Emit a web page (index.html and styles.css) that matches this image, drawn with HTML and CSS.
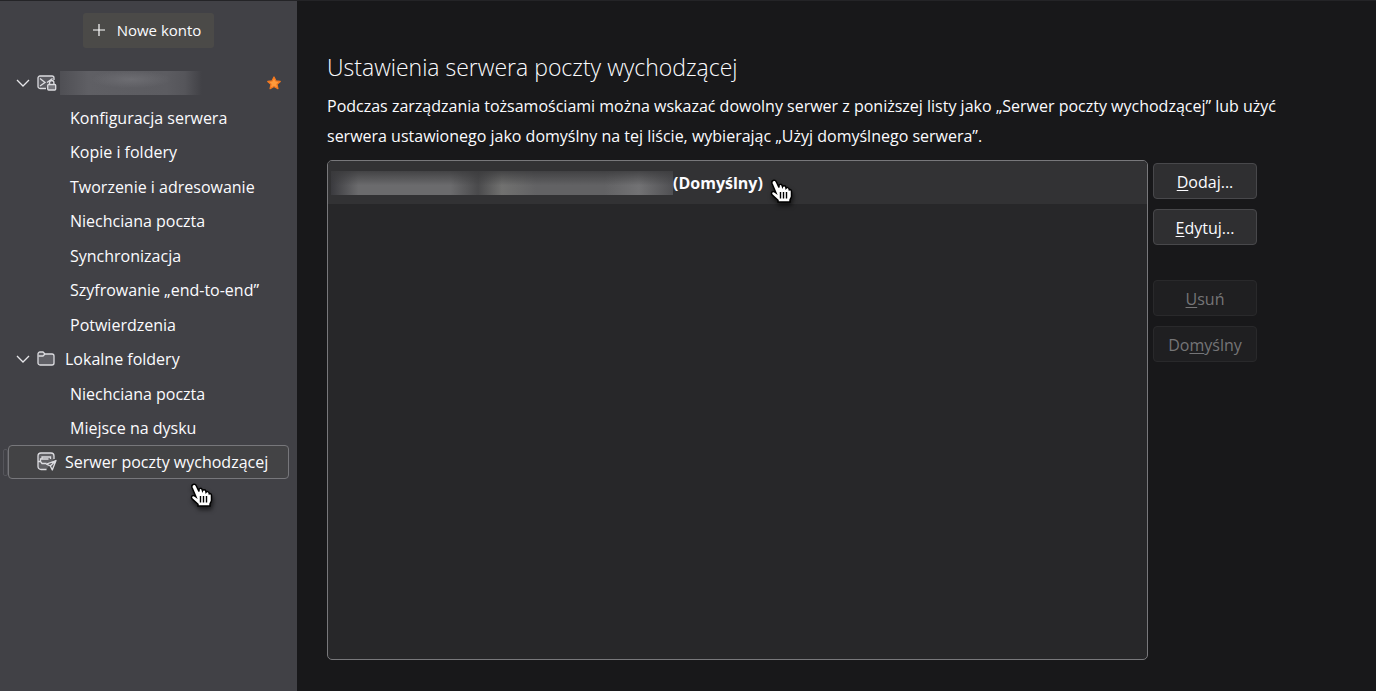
FILE: index.html
```html
<!DOCTYPE html>
<html lang="pl">
<head>
    <meta charset="UTF-8"/>
    <meta name="viewport" content="width=device-width, initial-scale=1.0"/>
    <title>Ustawienia kont</title>
    <link rel="stylesheet" href="styles.css">
</head>

<body>
<div class="container">
    <nav class="sidebar">
        <button class="new-account" type="button">
            <svg width="12" height="12" viewBox="0 0 12 12"><path d="M6 0v12M0 6h12" fill="none" stroke="#fff" stroke-width="1.2"/></svg>
            Nowe konto
        </button>
        <ul class="tree">
            <li class="row account">
                <svg class="twisty" width="14" height="8" viewBox="0 0 14 8"><path d="M1 1l6 6 6-6"/></svg>
                <svg class="icon" width="20" height="18" viewBox="0 0 20 18">
                    <path d="M9 14.500H3A2 2 0 0 1 1 12.500V4a2 2 0 0 1 2-2h12a2 2 0 0 1 2 2v2" fill="#5b5b61"/>
                    <path d="M3 4.500L8 8.500L3 12M15.500 4.500L10 8.500"/>
                    <rect x="10.700" y="10.500" width="8" height="5.500" rx="1" fill="#77777d"/>
                    <path d="M12.500 10V8.700a2.200 2.200 0 0 1 4.400 0V10"/>
                </svg>
                <span class="hidden-name"></span>
                <svg class="star" width="14" height="14" viewBox="0 0 14 14"><path d="M7 1l1.900 3.900 4.300.5-3.200 2.900.9 4.300L7 10.500l-3.900 2.100.9-4.300L.8 5.400l4.300-.5z" fill="#ff9a3c" stroke="#f5781e" stroke-linejoin="round"/></svg>
            </li>
            <li class="row"><a href="#">Konfiguracja serwera</a></li>
            <li class="row"><a href="#">Kopie i foldery</a></li>
            <li class="row"><a href="#">Tworzenie i adresowanie</a></li>
            <li class="row"><a href="#">Niechciana poczta</a></li>
            <li class="row"><a href="#">Synchronizacja</a></li>
            <li class="row"><a href="#">Szyfrowanie „end-to-end”</a></li>
            <li class="row"><a href="#">Potwierdzenia</a></li>
            <li class="row account">
                <svg class="twisty" width="14" height="8" viewBox="0 0 14 8"><path d="M1 1l6 6 6-6"/></svg>
                <svg class="icon" width="20" height="18" viewBox="0 0 20 18">
                    <path d="M1 4a2 2 0 0 1 2-2h3l2 2h7a2 2 0 0 1 2 2v7a2 2 0 0 1-2 2H3a2 2 0 0 1-2-2z" fill="#606066"/>
                    <path d="M1.500 6H6l2-2"/>
                </svg>
                <a href="#">Lokalne foldery</a>
            </li>
            <li class="row"><a href="#">Niechciana poczta</a></li>
            <li class="row"><a href="#">Miejsce na dysku</a></li>
            <li class="row account selected">
                <svg class="icon" width="20" height="20" viewBox="0 0 20 20">
                    <path d="M9.500 17.500H4a3 3 0 0 1-3-3V4a3 3 0 0 1 3-3h10a3 3 0 0 1 3 3v3" fill="#606064"/>
                    <path d="M1 9.500h2.500L5 11.500h4.500M3.500 9V7h8M5 7V5h8.500v2"/>
                    <path d="M19 8.500l-3.700 9.500-2-4-3.800-1.800zM13.300 14L19 8.500" fill="#58585c" stroke-linejoin="round"/>
                </svg>
                <a href="#">Serwer poczty wychodzącej</a>
            </li>
        </ul>
        <svg class="hand hand-menu" viewBox="0 0 24 26"><use href="#hand"/></svg>
    </nav>

    <main class="content">
        <h1>Ustawienia serwera poczty wychodzącej</h1>
        <p>Podczas zarządzania tożsamościami można wskazać dowolny serwer z poniższej listy jako „Serwer poczty wychodzącej” lub użyć serwera ustawionego jako domyślny na tej liście, wybierając „Użyj domyślnego serwera”.</p>
        <div class="servers">
            <ul class="server-list">
                <li class="server">
                    <span class="hidden-server"></span>
                    <strong>(Domyślny)</strong>
                    <svg class="hand hand-server" viewBox="0 0 24 26"><use href="#hand"/></svg>
                </li>
            </ul>
            <div class="buttons">
                <button type="button"><u>D</u>odaj...</button>
                <button type="button"><u>E</u>dytuj...</button>
                <button type="button" class="group-start" disabled><u>U</u>suń</button>
                <button type="button" disabled>Do<u>m</u>yślny</button>
            </div>
        </div>
    </main>
</div>

<!-- kursor -->
<svg width="0" height="0" class="defs">
    <symbol id="hand" viewBox="0 0 24 26">
        <path d="M3 1.500c1.500-.8 2.800 0 3.400 1.500L9 8.500V6.800c0-1.800 2.800-2 3.200 0l.3 1c.6-1.500 3-1.200 3.300.4l.2 1c.8-1.100 2.800-.7 3.100.8l.2.800c1-.6 2.200.2 2.200 1.700v4.800c0 1.500-1.500 2.500-1.500 4V23H8v-1.700l-5.700-5.200c-1.600-1.500-.7-3.600 1-3.500 1.200 0 1.800.8 2.700 1.400L2 4.500C1.500 3 2 2 3 1.500z" fill="#fff" stroke="#000" stroke-width="1.500"/>
        <path d="M10.500 13v6.500M13.500 13v6.500M16.500 13v6.500" stroke="#000" stroke-width="1.400"/>
    </symbol>
</svg>
</body>
</html>
```
FILE: styles.css
```css
* {
    box-sizing: border-box;
}

body {
    margin: 0;
    background-color: #18181a;
    color: #fbfbfe;
    font: 16px/30px "Open Sans", "Noto Sans", sans-serif;
}

.container {
    display: flex;
    min-height: 100vh;
    border-top: 1px solid #242427;
}

.sidebar {
    position: relative;
    width: 297px;
    flex-shrink: 0;
    padding: 12px 8px;
    background-color: #414146;
}

button {
    font: inherit;
    color: inherit;
    border: 1px solid #48484b;
    border-radius: 4px;
    background-color: #2f2f31;
}

.new-account {
    display: flex;
    align-items: center;
    gap: 12px;
    height: 35px;
    margin: 0 auto;
    padding: 0 13px 1px 10px;
    border: none;
    border-radius: 3px;
    background-color: #4b4a48;
    font-size: 15px;
    line-height: 20px;
}

ul {
    list-style: none;
    margin: 0;
    padding: 0;
}

.tree {
    margin-top: 18px;
}

.row {
    position: relative;
    display: flex;
    align-items: center;
    height: 34px;
    padding-left: 61px;
    border: 1px solid transparent;
    border-radius: 4px;
    white-space: nowrap;
}

.row:nth-child(even) {
    height: 35px;
}

.row a {
    color: inherit;
    text-decoration: none;
}

.account {
    padding-left: 7px;
}

.row svg path,
.row svg rect {
    stroke-width: 1.3;
}

.twisty {
    margin-right: 7px;
    fill: none;
    stroke: #e6e6e9;
}

.icon {
    margin-right: 8px;
    fill: none;
    stroke: #dcdce0;
}

.hidden-name {
    width: 142px;
    height: 24px;
    margin-left: -5px;
    background: radial-gradient(ellipse at 50% 35%, #6d6d72, transparent 40%), linear-gradient(90deg, #4f4f54, #5f5f64 20%, #5c5c61 75%, #55555a 88%, #414146);
}

.star {
    margin: 0 7px 0 auto;
}

.tree .selected {
    height: 34px;
    padding-left: 28px;
    border-color: #77777b;
    background-color: #434345;
}

.selected::before {
    content: "";
    position: absolute;
    left: -6px;
    top: 3px;
    width: 3px;
    height: 25px;
    border: 1px solid #55555b;
    border-radius: 2px;
}

.content {
    flex: 1;
    display: flex;
    flex-direction: column;
    padding: 50px 119px 31px 30px;
}

h1 {
    margin: 0 0 8px;
    font-size: 23px;
    font-weight: 300;
    line-height: 32px;
}

p {
    margin: 0 -40px 9px 0;
}

.servers {
    flex: 1;
    display: flex;
    gap: 5px;
}

.server-list {
    flex: 1;
    border: 1px solid #78787b;
    border-radius: 5px;
    background-color: #272729;
}

.server {
    position: relative;
    display: flex;
    align-items: center;
    height: 43px;
    padding-left: 3px;
    border-radius: 4px 4px 0 0;
    background-color: #323234;
}

.hidden-server {
    width: 342px;
    height: 24px;
    background: linear-gradient(#39393bcc, transparent 60%), linear-gradient(90deg, #3a3a3e, #6b6b6d 8%, #6b6b6d 35%, #4a4a4c 43%, #717170 50%, #626264 60%, #626264 80%, #727274 90%, #505053);
}

.buttons {
    display: flex;
    flex-direction: column;
    gap: 10px;
    width: 104px;
    padding-top: 3px;
}

.buttons button {
    height: 36px;
    padding: 1px 0 0;
}

.buttons .group-start {
    margin-top: 25px;
}

.buttons button:disabled {
    color: #757577;
    border-color: #29292b;
    background-color: #1f1f21;
}

u {
    text-underline-offset: 2px;
}

/* kursor leży nad treścią */
.hand {
    position: absolute;
    width: 24px;
    height: 26px;
    filter: drop-shadow(1px 3px 2px #0009);
}

.hand-menu {
    left: 190px;
    top: 482px;
}

.hand-server {
    left: 442px;
    top: 18px;
}

.defs {
    position: absolute;
}
```
